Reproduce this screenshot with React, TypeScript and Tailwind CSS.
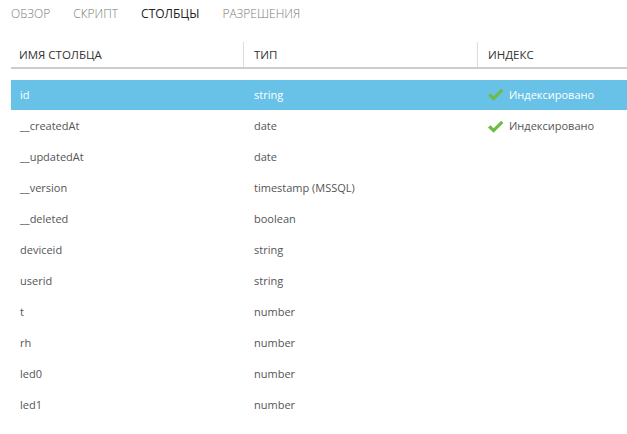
const tabs = [
  { label: "ОБЗОР", active: false },
  { label: "СКРИПТ", active: false },
  { label: "СТОЛБЦЫ", active: true },
  { label: "РАЗРЕШЕНИЯ", active: false },
];

const rows = [
  { name: "id", type: "string", indexed: true },
  { name: "__createdAt", type: "date", indexed: true },
  { name: "__updatedAt", type: "date" },
  { name: "__version", type: "timestamp (MSSQL)" },
  { name: "__deleted", type: "boolean" },
  { name: "deviceid", type: "string" },
  { name: "userid", type: "string" },
  { name: "t", type: "number" },
  { name: "rh", type: "number" },
  { name: "led0", type: "number" },
  { name: "led1", type: "number" },
];

function Check() {
  return (
    <svg width="17" height="14" viewBox="0 0 17 14" className="shrink-0">
      <path d="M1 7.5 L3.4 5.2 L6.6 8.2 L14.2 0.8 L16.4 3 L6.6 12.8 Z" fill="#6cbd45" />
    </svg>
  );
}

export default function App() {
  return (
    <div
      className="w-[627px] h-[434px] bg-white overflow-hidden pl-[11px] text-[11px]"
      style={{ fontFamily: '"Open Sans", "Noto Sans", sans-serif' }}
    >
      <div className="flex h-[28px] items-center gap-[23px] text-[12px] font-light">
        {tabs.map((t) => (
          <span
            key={t.label}
            className={t.active ? "text-[#222222] font-normal" : "text-[#7a7a7a]"}
          >
            {t.label}
          </span>
        ))}
      </div>

      <div className="mt-[14px] grid grid-cols-[232px_234px_1fr] h-[25px] items-center text-[#333333] text-[11.5px] border-b-2 border-[#cccccc] box-content">
        <div className="pl-[8px]">ИМЯ СТОЛБЦА</div>
        <div className="pl-[10px] h-full flex items-center border-l border-[#dddddd]">ТИП</div>
        <div className="pl-[10px] h-full flex items-center border-l border-[#dddddd]">ИНДЕКС</div>
      </div>

      <div className="mt-[11px]">
        {rows.map((r, i) => {
          const sel = i === 0;
          return (
            <div
              key={r.name}
              className={`grid grid-cols-[232px_234px_1fr] items-center ${
                sel ? "h-[30px] mb-px bg-[#68c2e8] text-white" : "h-[31px] text-[#555555]"
              }`}
            >
              <div className="pl-[9px]">{r.name}</div>
              <div className="pl-[11px]">{r.type}</div>
              <div className="pl-[10px] flex items-center gap-[5px]">
                {r.indexed && (
                  <>
                    <Check />
                    <span>Индексировано</span>
                  </>
                )}
              </div>
            </div>
          );
        })}
      </div>
    </div>
  );
}
